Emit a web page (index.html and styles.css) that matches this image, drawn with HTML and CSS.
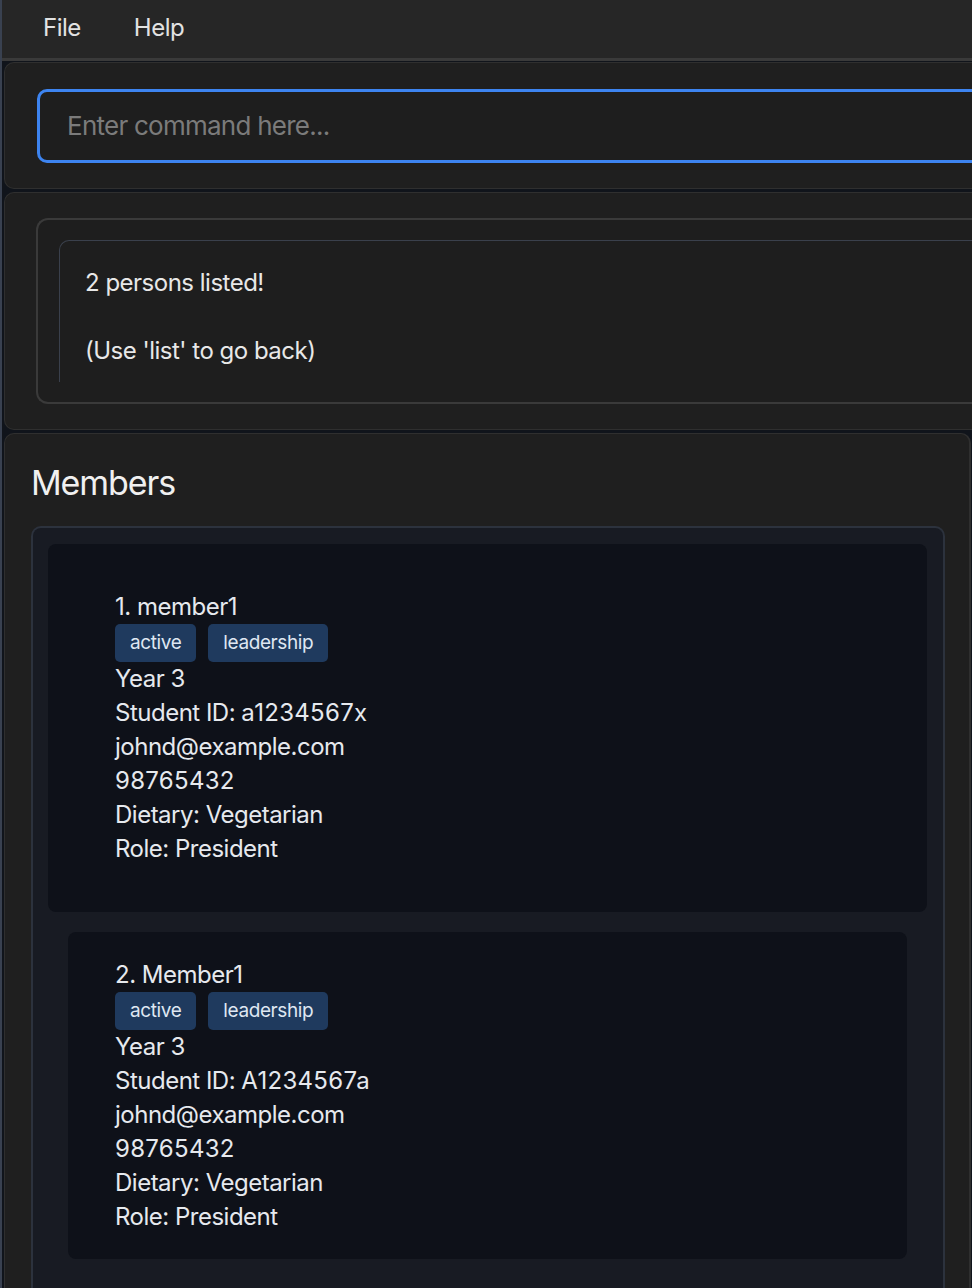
FILE: index.html
```html
<!DOCTYPE html>
<html>
<head>
<meta charset="utf-8">
<link rel="stylesheet" href="styles.css">
</head>
<body>
<div class="app">
  <div class="menubar">
    <span class="menu-item">File</span>
    <span class="menu-item">Help</span>
  </div>
  <div class="panel panel-cmd">
    <div class="cmd-input">Enter command here...</div>
  </div>
  <div class="panel panel-result">
    <div class="result-outer">
      <div class="result-inner">
        <div class="result-text">2 persons listed!<br><br>(Use 'list' to go back)</div>
      </div>
    </div>
  </div>
  <div class="panel panel-members">
    <div class="members-title">Members</div>
    <div class="list">
      <div class="card card-first">
        <div class="line">1. member1</div>
        <div class="tags"><span class="tag">active</span><span class="tag">leadership</span></div>
        <div class="line">Year 3</div>
        <div class="line">Student ID: <span class="num">a1234567x</span></div>
        <div class="line">johnd@example.com</div>
        <div class="line num">98765432</div>
        <div class="line">Dietary: Vegetarian</div>
        <div class="line">Role: President</div>
      </div>
      <div class="card card-second">
        <div class="line">2. Member1</div>
        <div class="tags"><span class="tag">active</span><span class="tag">leadership</span></div>
        <div class="line">Year 3</div>
        <div class="line">Student ID: <span class="num">A1234567a</span></div>
        <div class="line">johnd@example.com</div>
        <div class="line num">98765432</div>
        <div class="line">Dietary: Vegetarian</div>
        <div class="line">Role: President</div>
      </div>
    </div>
  </div>
</div>
</body>
</html>
```
FILE: styles.css
```css
html, body {
  margin: 0;
  padding: 0;
}
body {
  width: 972px;
  height: 1288px;
  overflow: hidden;
  background: #10141b;
  font-family: Inter, "Noto Sans", sans-serif;
}
.app {
  display: flex;
  flex-direction: column;
  border-left: 2px solid #394150;
  height: 1288px;
  box-sizing: border-box;
}
.app > * {
  flex-shrink: 0;
}
.menubar {
  height: 58px;
  box-sizing: border-box;
  background: #262626;
  border-bottom: 3px solid #3a3a3a;
  display: flex;
  align-items: center;
  padding: 0 0 4px 41px;
  gap: 53px;
  width: 1100px;
  height: 61px;
}
.menu-item {
  color: #e2e2e2;
  font-size: 24px;
  letter-spacing: -0.5px;
}
.panel {
  margin-left: 2px;
  background: #1f1f1f;
  border: 1px solid #2f2f2f;
  border-right: none;
  border-radius: 10px 0 0 10px;
  box-sizing: border-box;
}
.panel-cmd {
  margin-top: 1px;
  height: 127px;
  width: 1100px;
  padding: 26px 0 0 32px;
}
.cmd-input {
  width: 1000px;
  height: 74px;
  box-sizing: border-box;
  border: 3px solid #3d84f0;
  border-radius: 10px;
  background: #1e1e1e;
  color: #7b7b7b;
  font-size: 26px;
  letter-spacing: -0.75px;
  padding-left: 27px;
  line-height: 68px;
}
.panel-result {
  margin-top: 3px;
  height: 238px;
  width: 1100px;
  padding: 25px 0 0 31px;
}
.result-outer {
  width: 1000px;
  height: 186px;
  box-sizing: border-box;
  border: 2px solid #3a3a3a;
  border-right: none;
  border-radius: 12px 0 0 12px;
  padding: 20px 0 0 21px;
  background: #1e1e1e;
}
.result-inner {
  height: 142px;
  box-sizing: border-box;
  border-top: 1px solid #3a404c;
  border-left: 1px solid #3a404c;
  border-top-left-radius: 10px;
  padding: 25px 0 0 25px;
}
.result-text {
  color: #e8e8e8;
  font-size: 24px;
  letter-spacing: -0.5px;
  line-height: 34px;
}
.panel-members {
  margin-top: 3px;
  width: 967px;
  flex: 1;
  border-right: 2px solid #2f2f2f;
  border-radius: 10px 10px 0 0;
  padding: 27px 24px 0 26px;
}
.members-title {
  color: #f0f0f0;
  font-size: 34px;
  letter-spacing: -1.1px;
  line-height: 44px;
  margin-bottom: 21px;
}
.list {
  background: #181b23;
  border: 2px solid #2c323d;
  border-bottom: none;
  border-radius: 10px 10px 0 0;
  padding: 16px 16px 0 15px;
  display: flex;
  flex-direction: column;
  gap: 20px;
  height: 800px;
}
.card {
  background: #0e1119;
  border-radius: 8px;
  color: #e6e9ee;
  font-size: 24px;
  letter-spacing: -0.5px;
}
.num {
  letter-spacing: 0.3px;
}
.card-first {
  padding: 46px 0 46px 67px;
}
.card-second {
  margin: 0 20px;
  padding: 26px 0 25px 47px;
}
.line {
  line-height: 34px;
  white-space: nowrap;
}
.tags {
  display: flex;
  gap: 12px;
  height: 38px;
}
.tag {
  background: #1f3a5e;
  color: #dfe7f2;
  font-size: 19px;
  letter-spacing: -0.4px;
  border-radius: 5px;
  padding: 0 15px;
  line-height: 38px;
}
```
